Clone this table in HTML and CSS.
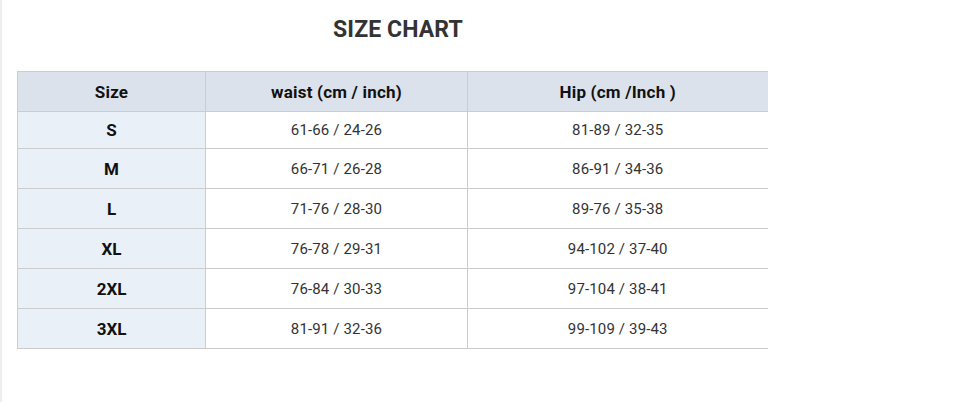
FILE: index.html
```html
<!DOCTYPE html>
<html>
<head>
<meta charset="utf-8">
<link rel="stylesheet" href="styles.css">
</head>
<body>
<div class="page">
  <div class="wrap">
    <h2 class="title">SIZE CHART</h2>
    <table class="chart">
      <colgroup>
        <col class="c-size">
        <col class="c-waist">
        <col class="c-hip">
      </colgroup>
      <thead>
        <tr class="head-row">
          <th>Size</th>
          <th>waist (cm / inch)</th>
          <th>Hip (cm /Inch )</th>
        </tr>
      </thead>
      <tbody>
        <tr class="first"><td class="sz">S</td><td>61-66 / 24-26</td><td>81-89 / 32-35</td></tr>
        <tr><td class="sz">M</td><td>66-71 / 26-28</td><td>86-91 / 34-36</td></tr>
        <tr><td class="sz">L</td><td>71-76 / 28-30</td><td>89-76 / 35-38</td></tr>
        <tr><td class="sz">XL</td><td>76-78 / 29-31</td><td>94-102 / 37-40</td></tr>
        <tr><td class="sz">2XL</td><td>76-84 / 30-33</td><td>97-104 / 38-41</td></tr>
        <tr><td class="sz">3XL</td><td>81-91 / 32-36</td><td>99-109 / 39-43</td></tr>
      </tbody>
    </table>
  </div>
</div>
</body>
</html>
```
FILE: styles.css
```css
html, body {
  margin: 0;
  padding: 0;
  background: #fff;
}
body {
  font-family: Roboto, "Liberation Sans", Arial, sans-serif;
  color: #333;
}
.page {
  min-height: 100vh;
  box-sizing: border-box;
  border-left: 2px solid #eeeeee;
}
.wrap {
  width: 780px;
  margin-left: 6px;
  padding-top: 16px;
}
.title {
  margin: 0;
  text-align: center;
  font-size: 23px;
  line-height: 28px;
  font-weight: 700;
  letter-spacing: 0.1px;
  color: #333;
}
.chart {
  margin-top: 27px;
  margin-left: 9px;
  width: 750px;
  border-collapse: collapse;
  table-layout: fixed;
}
.c-size { width: 188px; }
.c-waist { width: 262px; }
.c-hip { width: 300px; }
.chart th,
.chart td {
  text-align: center;
  padding: 0;
  border-top: 1px solid #cccccc;
  border-bottom: 1px solid #cccccc;
  border-left: 1px solid #cccccc;
}
.chart th {
  height: 39px;
  background: #dbe2ec;
  font-size: 17px;
  font-weight: 700;
  letter-spacing: 0.2px;
  color: #111;
}
.chart td {
  height: 39px;
  font-size: 15px;
  letter-spacing: 0.15px;
  color: #333;
}
.chart tr.first td {
  height: 36px;
}
.chart td.sz {
  background: #eaf0f7;
  font-size: 17px;
  font-weight: 700;
  letter-spacing: 0;
  color: #111;
}
```
